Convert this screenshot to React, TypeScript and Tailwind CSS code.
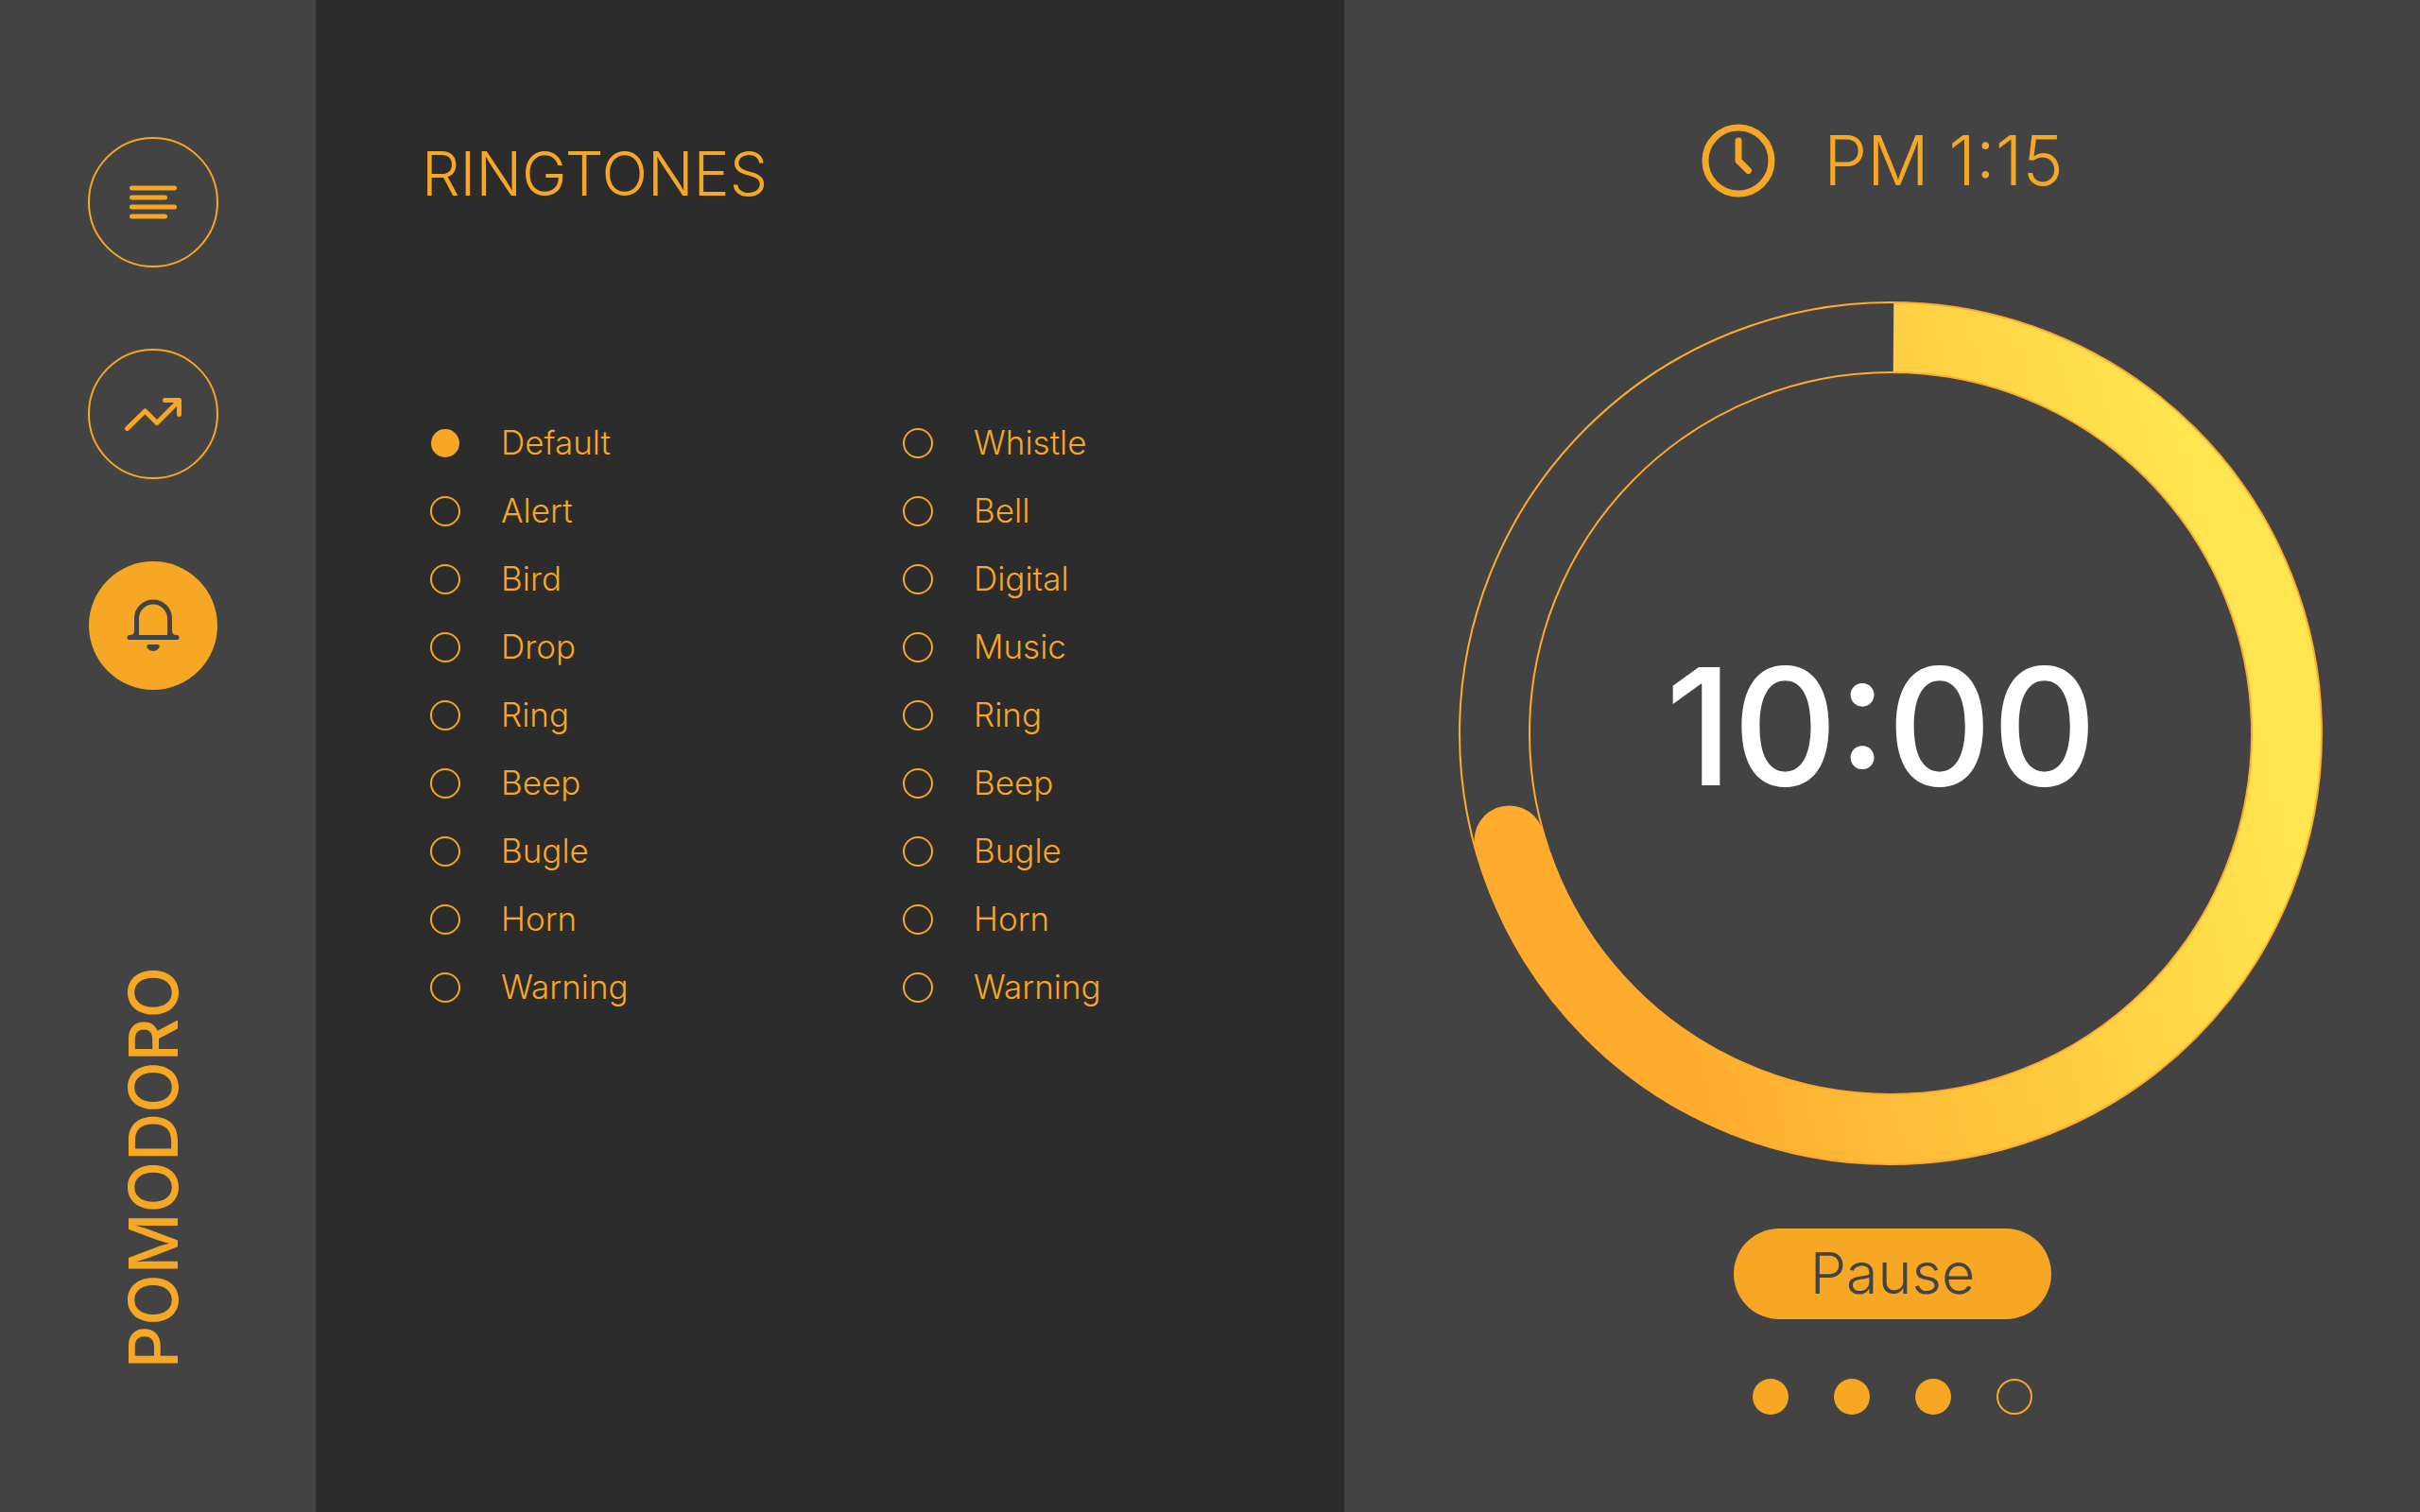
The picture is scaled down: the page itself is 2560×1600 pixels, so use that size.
import { useState } from "react";

const leftTones = ["Default", "Alert", "Bird", "Drop", "Ring", "Beep", "Bugle", "Horn", "Warning"];
const rightTones = ["Whistle", "Bell", "Digital", "Music", "Ring", "Beep", "Bugle", "Horn", "Warning"];

function ListIcon() {
  return (
    <svg className="h-20 w-20" viewBox="0 0 80 80" fill="none" stroke="currentColor" strokeWidth="5" strokeLinecap="round" aria-hidden="true">
      <path d="M17.5 25H62.5M17.5 35H52.5M17.5 45H62.5M17.5 55H52.5" />
    </svg>
  );
}

function TrendIcon() {
  return (
    <svg className="h-20 w-20" viewBox="0 0 80 80" fill="none" stroke="currentColor" strokeWidth="5" strokeLinecap="round" strokeLinejoin="round" aria-hidden="true">
      <path d="M12.5 55.5L31.5 37L44 49.5L67.5 26" />
      <path d="M52.5 25.5H67.5V40.5" />
      <path d="M61 26L67 32V26Z" fill="currentColor" stroke="none" />
    </svg>
  );
}

function BellIcon() {
  return (
    <svg className="h-20 w-20" viewBox="0 0 80 80" fill="none" stroke="currentColor" strokeWidth="5" strokeLinecap="round" strokeLinejoin="round" aria-hidden="true">
      <path d="M15 52.5H65" />
      <path d="M22.5 52V32.5A17.5 17.5 0 0 1 57.5 32.5V52" strokeLinecap="butt" />
      <path d="M15 50C18 50 20 49 20 45H25C25 49 24 51 23 53H15ZM65 50C62 50 60 49 60 45H55C55 49 56 51 57 53H65Z" fill="currentColor" stroke="none" />
      <path d="M36 60H44C46.500 60 47.500 62 46 64C43 68 37 68 34 64C32.500 62 33.500 60 36 60Z" fill="currentColor" stroke="none" />
    </svg>
  );
}

const nav = [
  { name: "Tasks", Icon: ListIcon, active: false },
  { name: "Statistics", Icon: TrendIcon, active: false },
  { name: "Ringtones", Icon: BellIcon, active: true },
];

function ToneColumn({ side, tones, selected, onSelect }: { side: string; tones: string[]; selected: string; onSelect: (id: string) => void }) {
  return (
    <div className="flex flex-col">
      {tones.map((tone) => {
        const id = `${side}-${tone}`;
        return (
          <label key={id} className="flex h-[72px] items-center gap-[43px] text-[35px] leading-10 font-light">
            <input
              type="radio"
              name="ringtone"
              checked={selected === id}
              onChange={() => onSelect(id)}
              className="h-8 w-8 shrink-0 appearance-none rounded-full border-2 border-[#f6a724] checked:border checked:border-transparent checked:bg-[#f6a724] checked:bg-clip-padding"
            />
            <span className="pb-[2px]">{tone}</span>
          </label>
        );
      })}
    </div>
  );
}

export default function App() {
  const [selected, setSelected] = useState("left-Default");
  return (
    <div className="grid min-h-screen grid-cols-[334px_1088fr_1138fr] bg-[#434343] font-['Inter',sans-serif] text-[#f6a724]">
      <aside className="flex flex-col items-center justify-between pt-[145px] pr-[10px] pb-[152px]">
        <nav className="flex flex-col gap-[86px]">
          {nav.map(({ name, Icon, active }) => (
            <button
              key={name}
              aria-label={name}
              className={
                active
                  ? "flex h-[138px] w-[138px] items-center justify-center rounded-full border border-transparent bg-[#f6a724] bg-clip-padding text-[#434343]"
                  : "flex h-[138px] w-[138px] items-center justify-center rounded-full border-2 border-[#f6a724]"
              }
            >
              <Icon />
            </button>
          ))}
        </nav>
        <div className="rotate-180 text-[71px] leading-[84px] font-medium [writing-mode:vertical-rl]">POMODORO</div>
      </aside>

      <main className="bg-[#2c2c2c] pt-[144px] pl-[112px]">
        <h1 className="text-[64px] leading-[80px] font-light">RINGTONES</h1>
        <div className="mt-[209px] grid grid-cols-[500px_1fr] pl-[9px]">
          <ToneColumn side="left" tones={leftTones} selected={selected} onSelect={setSelected} />
          <ToneColumn side="right" tones={rightTones} selected={selected} onSelect={setSelected} />
        </div>
      </main>

      <section className="flex flex-col items-center pt-[130px]">
        <div className="flex items-center gap-[50px]">
          <svg className="h-20 w-20" viewBox="0 0 80 80" fill="none" stroke="currentColor" strokeWidth="7" strokeLinecap="round" strokeLinejoin="round" aria-hidden="true">
            <circle cx="40" cy="40" r="35" />
            <path d="M40 19V40L50.5 50.5" />
          </svg>
          <time className="text-[73px] leading-[80px] font-light">PM 1:15</time>
        </div>
        <div className="mt-[109px] ml-[18px] grid place-items-center">
          <svg className="col-start-1 row-start-1 h-[914px] w-[914px]" viewBox="0 0 914 914" fill="none" aria-hidden="true">
            <defs>
              <linearGradient id="progress" gradientUnits="userSpaceOnUse" x1="210" y1="720" x2="880" y2="540">
                <stop offset="0" stopColor="#ffab2e" />
                <stop offset="1" stopColor="#ffe650" />
              </linearGradient>
            </defs>
            <path d="M460 38A419 419 0 1 1 53.5 570.5" stroke="url(#progress)" strokeWidth="74" />
            <circle cx="53.5" cy="570.5" r="37" fill="#ffab2e" />
            <circle cx="457" cy="457" r="456" stroke="#ffab2e" strokeWidth="2" />
            <circle cx="457" cy="457" r="382" stroke="#ffab2e" strokeWidth="2" />
          </svg>
          <div className="col-start-1 row-start-1 pr-5 pb-4 text-[172px] leading-none font-medium text-white">10:00</div>
        </div>
        <button className="mt-[67px] ml-[22px] h-24 w-[336px] rounded-full bg-[#f6a724] text-[61px] font-light text-[#434343]">Pause</button>
        <div className="mt-[63px] ml-[22px] flex gap-12" role="img" aria-label="3 of 4 sessions completed">
          <span className="h-[38px] w-[38px] rounded-full bg-[#f6a724]" />
          <span className="h-[38px] w-[38px] rounded-full bg-[#f6a724]" />
          <span className="h-[38px] w-[38px] rounded-full bg-[#f6a724]" />
          <span className="h-[38px] w-[38px] rounded-full border-2 border-[#f6a724]" />
        </div>
      </section>
    </div>
  );
}
